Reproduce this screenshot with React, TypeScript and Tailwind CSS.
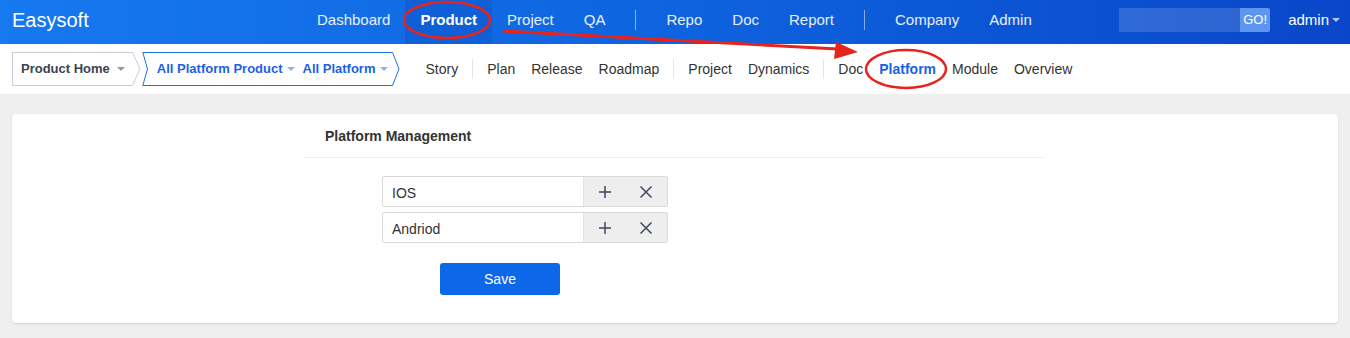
import React from 'react';

const topNav = [
  ['Dashboard'],
  ['Product', true],
  ['Project'],
  ['QA'],
  ['|'],
  ['Repo'],
  ['Doc'],
  ['Report'],
  ['|'],
  ['Company'],
  ['Admin'],
] as const;

const subNav = ['Story', '|', 'Plan', 'Release', 'Roadmap', '|', 'Project', 'Dynamics', '|', 'Doc', 'Platform', 'Module', 'Overview'];

const Caret = ({ className = '' }: { className?: string }) => (
  <span className={`inline-block w-0 h-0 border-x-[4px] border-x-transparent border-t-[4px] ${className}`} />
);

const PlatformRow = ({ value }: { value: string }) => (
  <div className="flex h-[31px] w-[286px] border border-[#d8d8d8] rounded-[2px]">
    <div className="flex-1 flex items-center px-[9px] pt-[3px] text-[14px] text-[#333]">{value}</div>
    <div className="w-[84px] bg-[#eeeeee] flex items-center justify-around border-l border-[#e4e4e4]">
      <svg width="14" height="14" viewBox="0 0 14 14">
        <path d="M7 1v12M1 7h12" stroke="#3d4a5c" strokeWidth="1.5" />
      </svg>
      <svg width="14" height="14" viewBox="0 0 14 14">
        <path d="M1.5 1.5l11 11M12.5 1.5l-11 11" stroke="#3d4a5c" strokeWidth="1.5" />
      </svg>
    </div>
  </div>
);

export default function App() {
  return (
    <div className="relative w-[1350px] h-[338px] bg-[#efefef] overflow-hidden font-['Liberation_Sans',Arial,sans-serif]">
      {/* top bar */}
      <div className="h-[44px] flex items-center pb-[4px] bg-gradient-to-r from-[#1679f0] via-[#0f63df] to-[#0a46c9] text-white">
        <div className="w-[302px] pl-[12px] text-[20px]">Easysoft</div>
        <nav className="flex items-center self-stretch -mb-[4px] text-[15px]">
          {topNav.map(([label, active], i) =>
            label === '|' ? (
              <span key={i} className="w-px h-[20px] bg-white/50 mx-[15px] mb-[4px]" />
            ) : (
              <span
                key={i}
                className={`h-full flex items-center px-[15px] pb-[4px] ${active ? 'bg-[#0f5fd6] font-bold text-white' : 'text-white/90'}`}
              >
                {label}
              </span>
            ),
          )}
        </nav>
        <div className="ml-auto flex items-center h-[24px]">
          <div className="w-[121px] h-[24px] bg-white/15" />
          <div className="h-[24px] w-[30px] bg-[#5d95ef] text-[13px] flex items-center justify-center rounded-r-[2px]">GO!</div>
        </div>
        <div className="ml-[18px] mr-[10px] flex items-center gap-[3px] text-[15px]">
          admin <Caret className="border-t-white/70" />
        </div>
      </div>

      {/* sub nav */}
      <div className="h-[50px] bg-white flex items-center pl-[12px] text-[14px] text-[#333]">
        <div className="h-[34px] flex items-center">
          <div className="h-full flex items-center gap-[7px] pl-[8px] pr-[7px] border border-r-0 border-[#c9ccd6] text-[13px] font-bold text-[#3c4353]">
            Product Home <Caret className="border-t-[#999]" />
          </div>
          <svg width="9" height="34" viewBox="0 0 9 34" className="block">
            <path d="M0 0.5H0.5L8 17L0.5 33.5H0" fill="white" stroke="#c9ccd6" />
          </svg>
        </div>
        <div className="h-[34px] flex items-center ml-[1px]">
          <svg width="7" height="34" viewBox="0 0 7 34" className="block">
            <path d="M7 0.5H0.8L5.5 17L0.8 33.5H7" fill="white" stroke="#1a6fe8" />
          </svg>
          <div className="h-full flex items-center pl-[8px] pr-[4px] border-y border-[#1a6fe8] text-[13px] font-bold text-[#1a5fe4] gap-[4px]">
            All Platform Product <Caret className="border-t-[#8fb0e8]" />
            <span className="ml-[4px]">All Platform</span> <Caret className="border-t-[#8fb0e8]" />
          </div>
          <svg width="8" height="34" viewBox="0 0 8 34" className="block">
            <path d="M0 0.5H0.5L7 17L0.5 33.5H0" fill="white" stroke="#1a6fe8" />
          </svg>
        </div>
        <div className="flex items-center ml-[18px]">
          {subNav.map((s, i) =>
            s === '|' ? (
              <span key={i} className="w-px h-[20px] bg-[#e5e5e5] mx-[6px]" />
            ) : (
              <span
                key={i}
                className={`px-[8px] ${s === 'Platform' ? 'font-bold text-[#1a5fe4]' : 'text-[#333]'}`}
              >
                {s}
              </span>
            ),
          )}
        </div>
      </div>

      {/* content */}
      <div className="px-[12px] pt-[20px]">
        <div className="bg-white rounded-[4px] shadow-[0_1px_2px_rgba(0,0,0,0.12)] h-[209px] flex justify-center">
          <div className="w-[740px]">
            <div className="h-[44px] flex items-center pl-[20px] pt-[2px] border-b border-[#eeeeee] text-[14px] font-bold text-[#333]">
              Platform Management
            </div>
            <div className="pl-[77px] pt-[18px] flex flex-col gap-[5px]">
              <PlatformRow value="IOS" />
              <PlatformRow value="Andriod" />
            </div>
            <div className="pl-[135px] pt-[20px]">
              <button className="w-[120px] h-[32px] rounded-[3px] bg-[#0d67e9] text-white text-[14px]">Save</button>
            </div>
          </div>
        </div>
      </div>

      {/* red annotations */}
      <svg className="absolute inset-0 pointer-events-none" width="1350" height="338">
        <ellipse cx="447" cy="20" rx="43" ry="18" fill="none" stroke="#e8231c" strokeWidth="2.5" />
        <ellipse cx="906" cy="69" rx="40" ry="19" fill="none" stroke="#e8231c" strokeWidth="2.5" />
        <path d="M503 31L838 49" stroke="#e8231c" strokeWidth="3" />
        <path d="M836 42L858 52L834 59Z" fill="#e8231c" />
      </svg>
    </div>
  );
}
